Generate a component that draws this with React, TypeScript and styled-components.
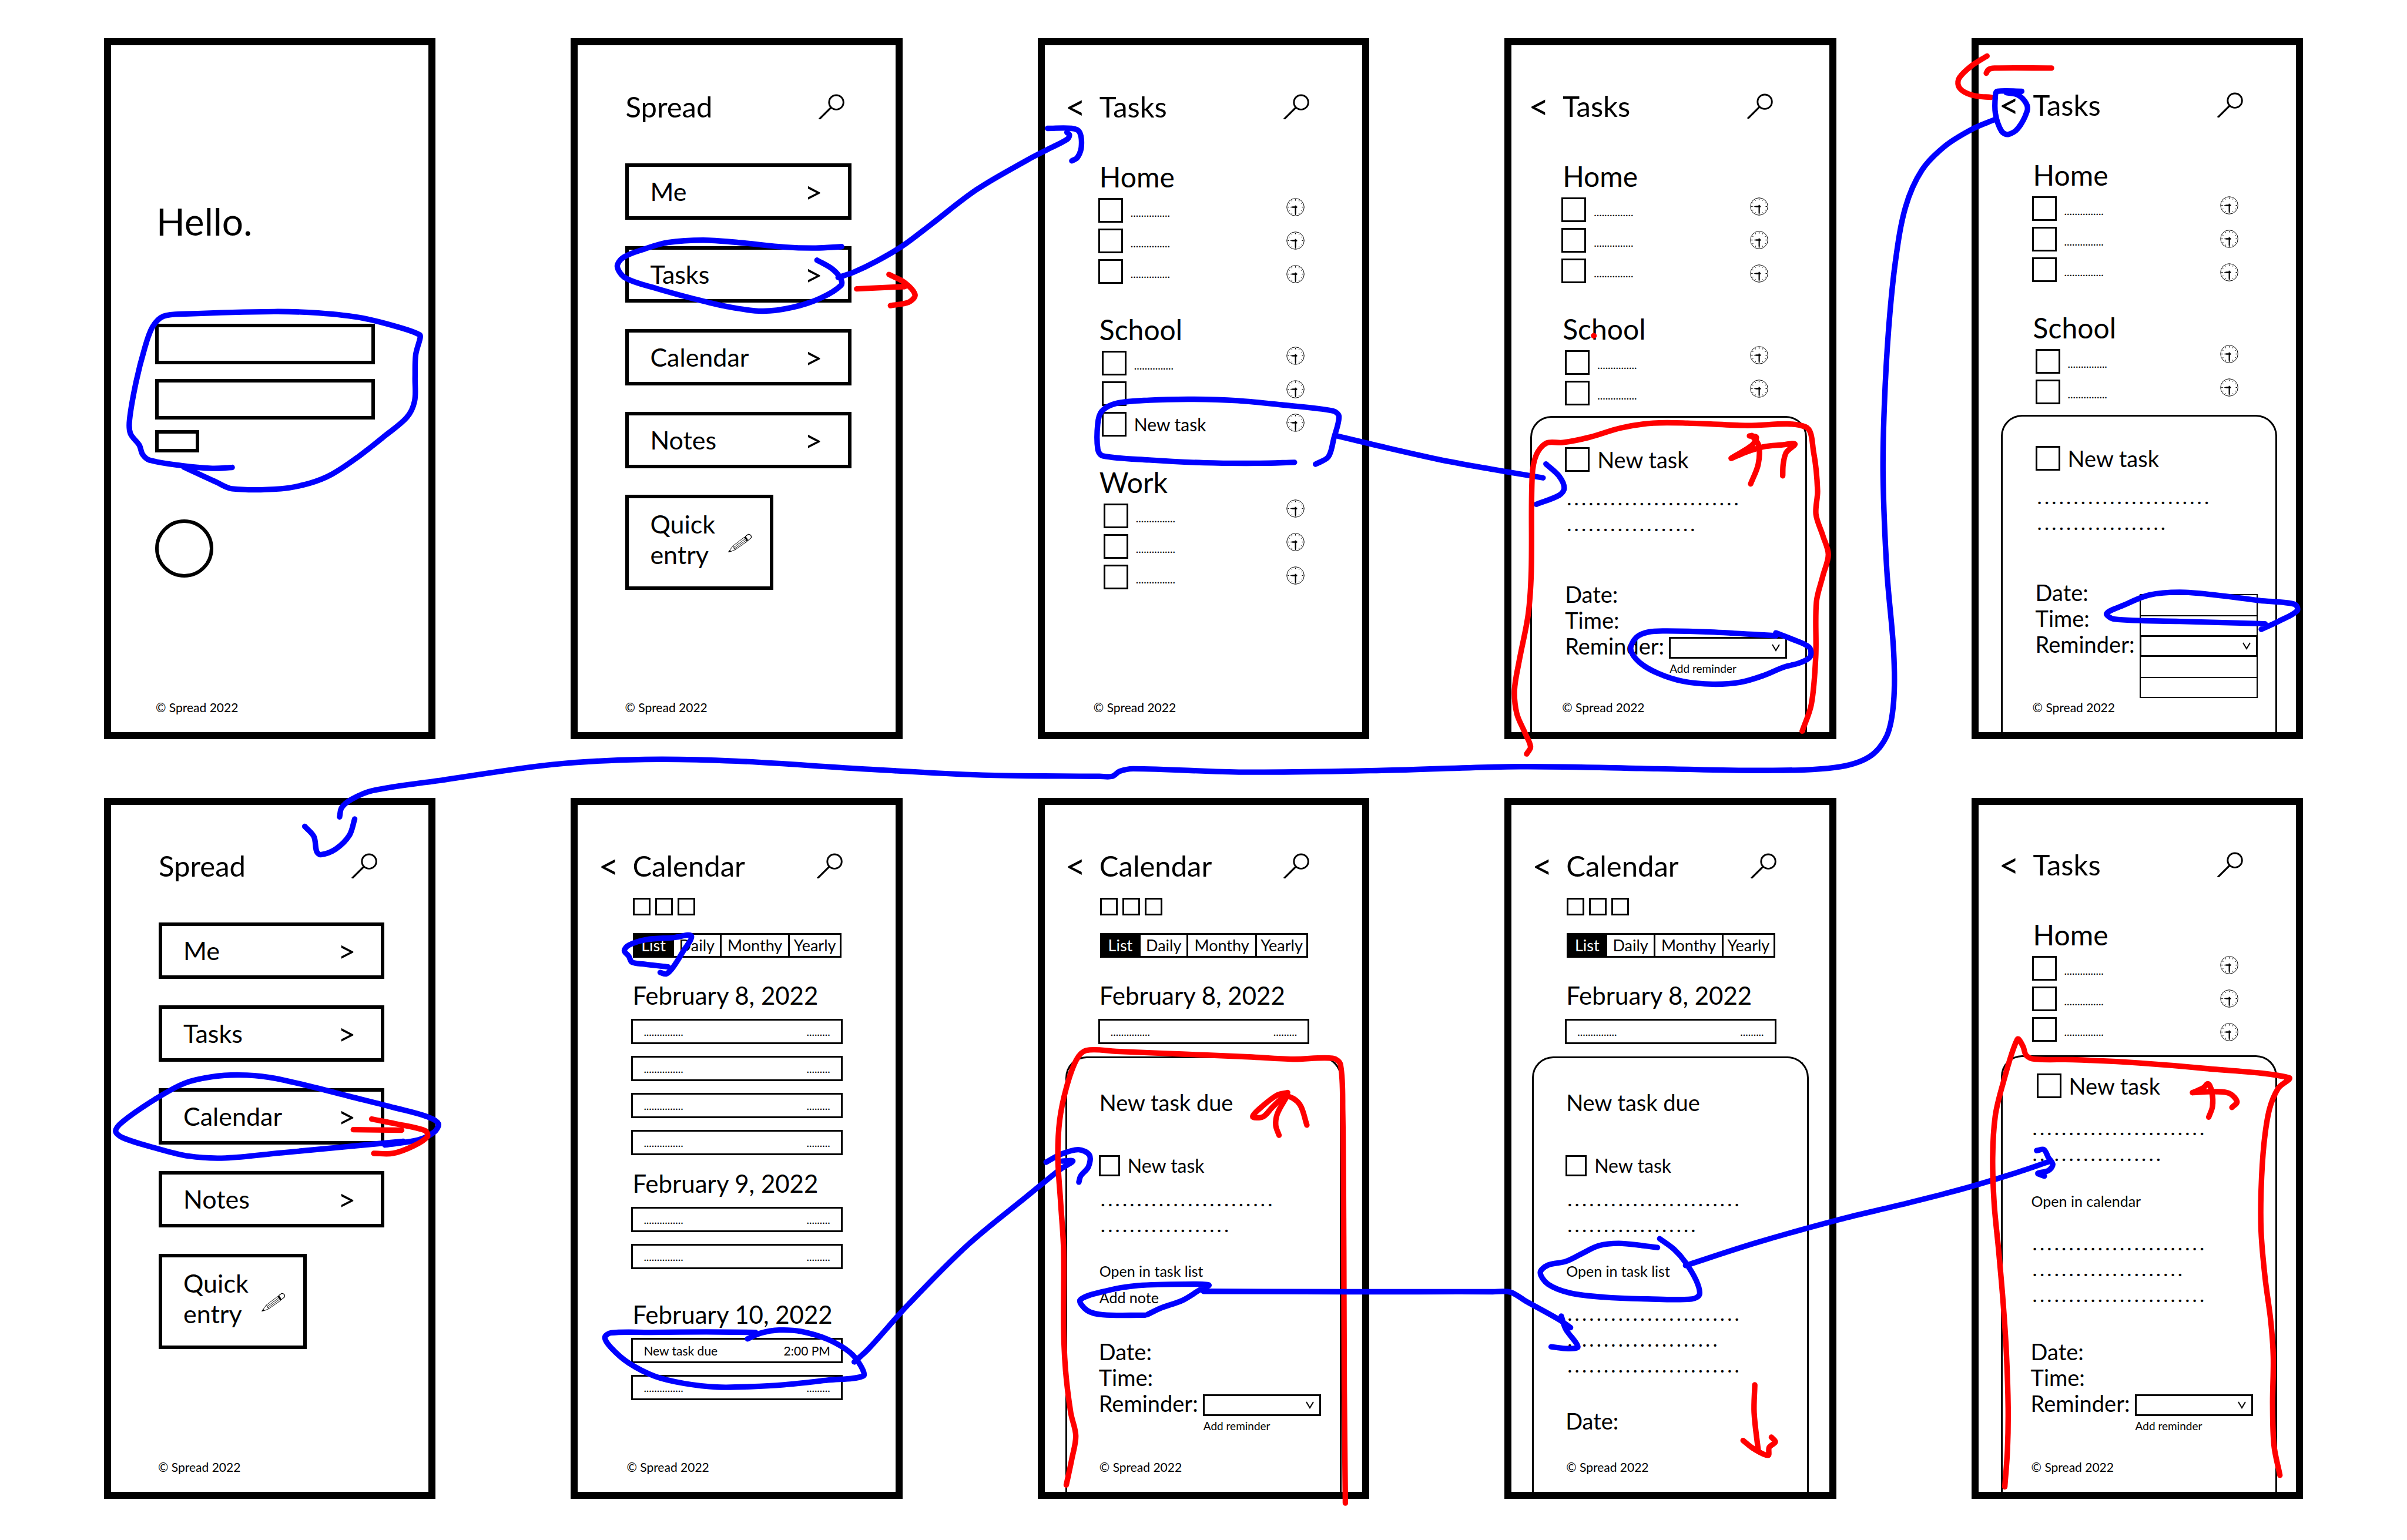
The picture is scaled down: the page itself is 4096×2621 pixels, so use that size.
import React, { useId } from 'react';
import styled, { createGlobalStyle, css } from 'styled-components';

const INK = '#000000';
const PAPER = '#ffffff';
const BLUE = '#0000ff';
const RED = '#ff0000';

const GlobalStyle = createGlobalStyle`
  *, *::before, *::after { box-sizing: border-box; }
  body {
    margin: 0;
    background: ${PAPER};
    color: ${INK};
    font-family: Lato, "Liberation Sans", sans-serif;
  }
  button, input, select {
    margin: 0;
    padding: 0;
    border: 0;
    border-radius: 0;
    background: ${PAPER};
    color: inherit;
    font: inherit;
    appearance: none;
  }
  h1, h2, h3, p, ul { margin: 0; padding: 0; font-weight: 400; }
  ul { list-style: none; }
  a { color: inherit; text-decoration: none; }
  svg { display: block; }
`;

/* ---------- board and phone frame ---------- */

const Board = styled.main`
  position: relative;
  display: grid;
  grid-template-columns: repeat(5, minmax(0, 1fr));
  gap: 100px 230px;
  padding: 65px 177px 70px;
`;

const Frame = styled.section`
  display: flex;
  flex-direction: column;
  min-height: 1193px;
  border: 12px solid ${INK};
  overflow: hidden;
`;

const Upper = styled.div<{ $shift?: number; $top: number }>`
  display: flex;
  flex-direction: column;
  padding-top: ${p => p.$top}px;
  margin: 0 ${p => p.$shift ?? 0}px 0 ${p => -(p.$shift ?? 0)}px;
`;

const Legal = styled.footer<{ $left: number }>`
  margin: auto 0 30px ${p => p.$left}px;
  font-size: 21px;
  line-height: 24px;
`;

/* ---------- header ---------- */

const HeaderBar = styled.header<{ $root?: boolean }>`
  display: flex;
  align-items: center;
  height: 48px;
  padding: ${p => (p.$root ? '0 87px 0 81px' : '0 90px 0 35px')};
`;

const BackButton = styled.button`
  width: 58px;
  text-align: left;
  font-size: 60px;
  line-height: 48px;
`;

const Title = styled.h1`
  flex: 1;
  font-size: 49px;
  line-height: 48px;
`;

const IconButton = styled.button`
  display: block;
  flex: none;
`;

const SearchIcon = () => (
  <svg width="44" height="44" viewBox="18 46 180 180" aria-hidden="true">
    <circle cx="141" cy="108" r="50" fill="none" stroke={INK} strokeWidth="12" />
    <path d="M105 144 22 226" fill="none" stroke={INK} strokeWidth="13" />
  </svg>
);

function Header({ title, root }: { title: string; root?: boolean }) {
  return (
    <HeaderBar $root={root}>
      {!root && <BackButton aria-label="Back">&lt;</BackButton>}
      <Title>{title}</Title>
      <IconButton aria-label="Search"><SearchIcon /></IconButton>
    </HeaderBar>
  );
}

/* ---------- login ---------- */

const Login = styled.form`
  display: flex;
  flex-direction: column;
  align-items: flex-start;
  padding: 268px 91px 0 75px;
`;

const Greeting = styled.h1`
  padding: 0 2px;
  margin-bottom: 142px;
  font-size: 64px;
  line-height: 64px;
`;

const LoginField = styled.input`
  width: 100%;
  height: 69px;
  padding: 0 16px;
  margin-bottom: 25px;
  border: 6px solid ${INK};
  font-size: 32px;
`;

const Submit = styled.button`
  width: 75px;
  height: 38px;
  margin: -7px 0 114px;
  border: 6px solid ${INK};
`;

const Round = styled.button`
  width: 99px;
  height: 99px;
  border: 6px solid ${INK};
  border-radius: 50%;
`;

function LoginScreen() {
  return (
    <Frame>
      <Login onSubmit={e => e.preventDefault()}>
        <Greeting>Hello.</Greeting>
        <LoginField type="text" aria-label="User name" />
        <LoginField type="password" aria-label="Password" />
        <Submit type="submit" aria-label="Sign in" />
        <Round type="button" aria-label="Profile" />
      </Login>
      <Legal $left={76}>© Spread 2022</Legal>
    </Frame>
  );
}

/* ---------- main menu ---------- */

const Menu = styled.nav`
  display: flex;
  flex-direction: column;
  align-items: flex-start;
  gap: 45px;
  padding: 73px 75px 0 81px;
`;

const MenuButton = styled.button`
  display: flex;
  align-items: center;
  justify-content: space-between;
  width: 100%;
  height: 96px;
  padding: 0 43px 0 36px;
  border: 6px solid ${INK};
  text-align: left;
  font-size: 43px;
  line-height: 52px;
`;

const Chevron = styled.span`
  font-size: 53px;
`;

const QuickButton = styled(MenuButton)`
  width: 252px;
  height: 162px;
  padding: 0 31px 10px 36px;
`;

const PencilIcon = () => (
  <svg width="40" height="44" viewBox="70 28 168 184" aria-hidden="true">
    <g fill="none" stroke={INK} strokeWidth="4" strokeLinejoin="round">
      <path d="M72 210 84 195 103 168 184 106M72 210 92 206 122 193 207 134" />
      <path d="M103 168 112 176 110 183 119 185 122 193" />
      <path d="M112 176 190 118M119 185 198 126" />
      <path d="M193 99 213 84Q224 82 232 91Q238 101 235 109L212 128" strokeWidth="5" />
    </g>
    <path d="M181 108 194 98Q207 110 213 127L202 137Q200 118 181 108ZM70 212 84 196 92 206Z" fill={INK} />
  </svg>
);

function MenuScreen({ top }: { top: number }) {
  return (
    <Frame>
      <Upper $top={top}>
        <Header root title="Spread" />
        <Menu>
          {['Me', 'Tasks', 'Calendar', 'Notes'].map(item => (
            <MenuButton key={item}><span>{item}</span><Chevron>&gt;</Chevron></MenuButton>
          ))}
          <QuickButton><span>Quick<br />entry</span><PencilIcon /></QuickButton>
        </Menu>
      </Upper>
      <Legal $left={80}>© Spread 2022</Legal>
    </Frame>
  );
}

/* ---------- tasks ---------- */

const Groups = styled.div`
  display: flex;
  flex-direction: column;
  gap: 54px;
  padding: 72px 98px 0 91px;
`;

const GroupTitle = styled.h2`
  padding-left: 2px;
  margin-bottom: 12px;
  font-size: 48px;
  line-height: 48px;
`;

const GroupBody = styled.div`
  display: flex;
  justify-content: space-between;
  align-items: flex-start;
`;

const TaskList = styled.ul<{ $indent: number }>`
  display: flex;
  flex-direction: column;
  gap: 10px;
  padding-left: ${p => p.$indent}px;
`;

const ClockList = styled.div<{ $lift: number }>`
  display: flex;
  flex-direction: column;
  gap: 26px;
  margin-top: ${p => -p.$lift}px;
`;

const CheckRow = styled.label<{ $size: 'list' | 'small' | 'large'; $indent?: number }>`
  display: flex;
  align-items: center;
  gap: 13px;
  padding-left: ${p => p.$indent ?? 0}px;
  font-size: ${p => ({ list: 30, small: 32, large: 38 })[p.$size]}px;
  line-height: 36px;
`;

const Tick = styled.input<{ $small?: boolean }>`
  flex: none;
  width: ${p => (p.$small ? 36 : 42)}px;
  height: ${p => (p.$small ? 36 : 42)}px;
  border: 3px solid ${INK};
`;

const FinePrint = styled.span<{ $low?: boolean }>`
  font-size: 19px;
  line-height: 24px;
  ${p => p.$low && css`padding-top: 8px;`}
`;

const ClockIcon = () => (
  <svg width="31" height="31" viewBox="0 0 130 130" aria-hidden="true">
    <circle cx="65" cy="65" r="62" fill="none" stroke={INK} strokeWidth="4" />
    {Array.from({ length: 12 }, (_, i) => (
      <rect
        key={i}
        x="62.5"
        y={i % 3 ? 11 : 9}
        width="5"
        height={i % 3 ? 5 : 10}
        fill={INK}
        transform={`rotate(${i * 30} 65 65)`}
      />
    ))}
    <path d="M76 61H46L28 65 46 69H76ZM62 54V108L65 122 69 108V54Z" fill={INK} stroke={INK} strokeWidth="2" />
  </svg>
);

const SHORT_NOTE = '...............';
const SHORT_TIME = '.........';

type Group = { title: string; indent: number; lift: number; tasks: string[] };

const home: Group = { title: 'Home', indent: 0, lift: 0, tasks: ['', '', ''] };
const school: Group = { title: 'School', indent: 6, lift: 7, tasks: ['', ''] };
const schoolWithNew: Group = { ...school, tasks: ['', '', 'New task'] };
const work: Group = { title: 'Work', indent: 9, lift: 7, tasks: ['', '', ''] };

function TaskGroups({ groups }: { groups: Group[] }) {
  return (
    <Groups>
      {groups.map(g => (
        <section key={g.title}>
          <GroupTitle>{g.title}</GroupTitle>
          <GroupBody>
            <TaskList $indent={g.indent}>
              {g.tasks.map((t, i) => (
                <li key={i}>
                  <CheckRow $size="list">
                    <Tick type="checkbox" />
                    {t || <FinePrint $low>{SHORT_NOTE}</FinePrint>}
                  </CheckRow>
                </li>
              ))}
            </TaskList>
            <ClockList $lift={g.lift}>
              {g.tasks.map((_, i) => (
                <IconButton key={i} aria-label="Set time"><ClockIcon /></IconButton>
              ))}
            </ClockList>
          </GroupBody>
        </section>
      ))}
    </Groups>
  );
}

/* ---------- calendar ---------- */

const Calendar = styled.div`
  display: flex;
  flex-direction: column;
  padding: 31px 90px 0 91px;
`;

const Swatches = styled.div`
  display: flex;
  gap: 8px;
  padding-left: 3px;
`;

const Swatch = styled.button`
  width: 30px;
  height: 30px;
  border: 3px solid ${INK};
`;

const Tabs = styled.div`
  display: grid;
  grid-template-columns: 63fr 81fr 116fr 87fr;
  height: 42px;
  margin: 30px 2px 0 3px;
  border: 3px solid ${INK};
`;

const Tab = styled.button<{ $on?: boolean }>`
  border-left: 3px solid ${INK};
  background: ${p => (p.$on ? INK : PAPER)};
  color: ${p => (p.$on ? PAPER : INK)};
  font-size: 27px;
  line-height: 32px;
  text-align: center;
  &:first-child { border-left: 0; }
`;

const DayTitle = styled.h2<{ $above: number }>`
  padding-left: 2px;
  margin: ${p => p.$above}px 0 16px;
  font-size: 42px;
  line-height: 48px;
`;

const Entries = styled.ul`
  display: flex;
  flex-direction: column;
  gap: 20px;
`;

const Entry = styled.li`
  display: flex;
  align-items: center;
  justify-content: space-between;
  height: 43px;
  padding: 0 18px;
  border: 3px solid ${INK};
`;

const EntryText = styled.span`
  font-size: 21px;
  line-height: 24px;
`;

type Day = { date: string; above: number; entries: [string, string][] };
const blank: [string, string] = ['', ''];

function CalendarBody({ days }: { days: Day[] }) {
  return (
    <Calendar>
      <Swatches>
        {['First', 'Second', 'Third'].map(n => <Swatch key={n} aria-label={`${n} calendar`} />)}
      </Swatches>
      <Tabs role="tablist">
        {['List', 'Daily', 'Monthy', 'Yearly'].map((t, i) => (
          <Tab key={t} role="tab" aria-selected={i === 0} $on={i === 0}>{t}</Tab>
        ))}
      </Tabs>
      {days.map(d => (
        <section key={d.date}>
          <DayTitle $above={d.above}>{d.date}</DayTitle>
          <Entries>
            {d.entries.map(([what, when], i) => (
              <Entry key={i}>
                {what ? <EntryText>{what}</EntryText> : <FinePrint>{SHORT_NOTE}</FinePrint>}
                {when ? <EntryText>{when}</EntryText> : <FinePrint>{SHORT_TIME}</FinePrint>}
              </Entry>
            ))}
          </Entries>
        </section>
      ))}
    </Calendar>
  );
}

const feb8: Day = { date: 'February 8, 2022', above: 40, entries: [blank, blank, blank, blank] };
const feb8Short: Day = { ...feb8, entries: [blank] };
const feb9: Day = { date: 'February 9, 2022', above: 24, entries: [blank, blank] };
const feb10: Day = { date: 'February 10, 2022', above: 53, entries: [['New task due', '2:00 PM'], blank] };

/* ---------- bottom sheet ---------- */

const Sheet = styled.section<{ $above: number; $side: number; $pad: number; $top: number }>`
  flex: 1;
  display: flex;
  flex-direction: column;
  margin: ${p => p.$above}px ${p => 70 - p.$side}px 0 ${p => p.$side}px;
  padding: ${p => p.$top}px 0 0 ${p => p.$pad}px;
  border: 3px solid ${INK};
  border-bottom: 0;
  border-radius: 36px 36px 0 0;
  background: ${PAPER};
`;

const SheetTitle = styled.h2`
  padding-left: 1px;
  margin-bottom: 66px;
  font-size: 38px;
  line-height: 48px;
`;

const NoteLines = styled.p<{ $above: number }>`
  margin-top: ${p => p.$above}px;
  padding-left: 4px;
  font-size: 26px;
  font-weight: 900;
  line-height: 44px;
  white-space: nowrap;
`;

const Links = styled.div<{ $above: number }>`
  display: flex;
  flex-direction: column;
  align-items: flex-start;
  margin-top: ${p => p.$above}px;
  padding-left: 1px;
  font-size: 25px;
  line-height: 45px;
`;

const Fields = styled.div<{ $above: number }>`
  margin-top: ${p => p.$above}px;
  font-size: 38px;
  line-height: 44px;
`;

const ReminderRow = styled.div`
  display: grid;
  grid-template-columns: 177px 201px;
  align-items: end;
`;

const SelectBox = styled.div`
  position: relative;
`;

const Select = styled.select`
  display: block;
  width: 100%;
  height: 37px;
  border: 3px solid ${INK};
`;

const Caret = styled.svg`
  position: absolute;
  top: 12px;
  right: 12px;
  pointer-events: none;
`;

const Options = styled.ul<{ $side: 'above' | 'below' }>`
  position: absolute;
  left: 0;
  right: 0;
  ${p => (p.$side === 'above' ? 'bottom: 100%;' : 'top: 100%;')}
  border: 2px solid ${INK};
  ${p => (p.$side === 'above' ? 'border-bottom: 0;' : 'border-top: 0;')}
`;

const Option = styled.li`
  height: 34px;
  & + & { border-top: 2px solid ${INK}; }
`;

const AddReminder = styled.a`
  display: block;
  padding: 5px 0 0 178px;
  font-size: 19px;
  line-height: 24px;
`;

const dots = (n: number) => Array(n).fill('.').join(' ');

function Notes({ above, lines }: { above: number; lines: number[] }) {
  return (
    <NoteLines $above={above}>
      {lines.map((n, i) => <React.Fragment key={i}>{i > 0 && <br />}{dots(n)}</React.Fragment>)}
    </NoteLines>
  );
}

function ReminderFields({ above, open }: { above: number; open?: boolean }) {
  const id = useId();
  return (
    <Fields $above={above}>
      <p>Date:</p>
      <p>Time:</p>
      <ReminderRow>
        <label htmlFor={id}>Reminder:</label>
        <SelectBox>
          <Select id={id} />
          <Caret width="14" height="13" viewBox="0 0 14 13" aria-hidden="true">
            <path d="M1 1 7 11 13 1" fill="none" stroke={INK} strokeWidth="2" />
          </Caret>
          {open && <Options $side="above"><Option /><Option /></Options>}
          {open && <Options $side="below"><Option /><Option /></Options>}
        </SelectBox>
      </ReminderRow>
      {!open && <AddReminder href="#add-reminder">Add reminder</AddReminder>}
    </Fields>
  );
}

/* ---------- pen marks over the board ---------- */

type Area = [x: number, y: number, w: number, h: number];
type Mark = { area: Area; color: string; pts: number[] };

const GRID = 1568;
const sheetA: Area = [230, 60, 820, 1720];
const sheetB: Area = [1330, 60, 870, 1720];
const sheetC: Area = [2430, 60, 820, 1720];
const sheetD: Area = [3530, 60, 850, 1760];
const sheetE: Area = [4600, 60, 870, 1720];
const sheetF: Area = [230, 1860, 850, 1720];
const sheetG: Area = [1330, 1860, 820, 1720];
const sheetH: Area = [2430, 1860, 820, 1720];
const sheetI: Area = [3530, 1860, 820, 1720];
const sheetJ: Area = [4640, 1860, 820, 1720];
const board: Area = [0, 0, GRID, GRID];

const blue = (area: Area, ...pts: number[]): Mark => ({ area, color: BLUE, pts });
const red = (area: Area, ...pts: number[]): Mark => ({ area, color: RED, pts });

const marks: Mark[] = [
  blue(sheetA, 610,953, 520,955, 380,949, 235,937, 205,925, 190,905, 150,880, 146,850, 175,770, 215,695, 250,650, 300,627, 400,622, 800,617, 1000,620, 1200,631, 1380,653, 1458,667, 1460,674, 1440,710, 1437,760, 1435,810, 1400,845, 1300,885, 1180,930, 1060,968, 960,987, 830,999, 610,999, 540,985, 390,952),
  blue(sheetB, 1190,477, 1080,480, 950,478, 750,468, 600,463, 450,468, 350,482, 260,500, 234,520, 270,545, 400,567, 550,588, 700,606, 850,616, 980,608, 1100,588, 1188,560, 1185,545, 1150,525, 1085,506),
  blue(board, 1982,656, 2018,644, 2074,617, 2135,581, 2200,532, 2310,448, 2430,378, 2482,351, 2524,329, 2529,319, 2523,313),
  blue(sheetC, 90,222, 200,222, 235,230, 243,262, 225,285, 200,292),
  red(sheetB, 1254,568, 1460,563),
  red(sheetB, 1392,537, 1460,555, 1503,581, 1475,597, 1398,604),
  blue(sheetC, 1207,942, 1050,944, 800,943, 550,937, 340,928, 318,915, 317,860, 335,832, 400,815, 550,808, 750,806, 950,809, 1150,818, 1380,831, 1408,843, 1385,890, 1360,930, 1302,946),
  blue(board, 3158,1030, 3250,1052, 3400,1086, 3530,1110, 3649,1130),
  blue(sheetD, 232,924, 290,950, 312,975, 290,990, 190,1009),
  red(sheetD, 148,1535, 165,1520, 140,1490, 105,1450, 95,1400, 115,1340, 155,1240, 168,1150, 172,950, 190,905, 235,880, 305,879, 420,868, 560,848, 700,838, 850,838, 1100,843, 1365,846, 1400,900, 1417,980, 1410,1030, 1440,1075, 1464,1115, 1440,1160, 1412,1215, 1409,1330, 1390,1430, 1350,1487),
  red(sheetD, 1120,865, 1150,868, 1130,885, 1040,912, 1100,900, 1180,888, 1260,884, 1318,882, 1280,900, 1267,925, 1265,949),
  red(sheetD, 1130,864, 1160,885, 1158,925, 1125,966),
  red(sheetD, 440,654, 442,654),
  blue(sheetD, 1235,1280, 1300,1292, 1380,1310, 1385,1330, 1340,1343, 1270,1352, 1180,1370, 1080,1384, 960,1388, 830,1382, 720,1365, 640,1342, 602,1315, 625,1290, 680,1278, 760,1276, 950,1278, 1235,1286),
  red(sheetE, 453,92, 210,92, 185,95, 175,103),
  red(sheetE, 178,66, 110,88, 60,113, 56,130, 80,143, 130,152, 195,155),
  blue(sheetE, 326,142, 222,142, 214,150, 214,190, 240,228, 268,235, 310,222, 349,185, 345,168, 310,150, 260,145),
  blue(board, 4716,283, 4666,304, 4600,345, 4545,402, 4506,490, 4482,620, 4466,780, 4456,960, 4453,1125, 4462,1350, 4478,1540, 4478,1660, 4462,1740, 4420,1790, 4340,1815, 4175,1822, 3920,1818, 3594,1813, 3267,1822, 2940,1826, 2680,1818, 2648,1824, 2630,1836, 2600,1836, 2323,1833, 2033,1818, 1742,1800, 1525,1796, 1307,1808, 1052,1844, 880,1870, 832,1890, 808,1910, 803,1932),
  blue(sheetF, 905,86, 945,108, 957,140, 975,147, 1040,135, 1100,105, 1123,70),
  blue(sheetE, 1363,1290, 1000,1285, 720,1280, 688,1268, 760,1250, 870,1228, 1000,1222, 1150,1228, 1340,1240, 1490,1248, 1500,1262, 1420,1285, 1347,1302),
  blue(sheetF, 1335,765, 1100,776, 800,790, 560,801, 400,797, 250,779, 110,757, 80,743, 110,723, 250,675, 380,640, 500,626, 620,622, 750,627, 900,643, 1100,668, 1300,693, 1440,712, 1488,727, 1470,745, 1400,762, 1255,773),
  red(sheetF, 1117,740, 1328,741),
  red(sheetF, 1197,717, 1300,727, 1430,742, 1440,755, 1380,775, 1290,791, 1206,791),
  blue(sheetG, 442,401, 470,404, 500,390, 540,360, 583,322, 500,326, 380,330, 300,342, 280,354, 300,366, 315,379, 370,383, 478,389),
  blue(sheetG, 873,1177, 650,1176, 400,1177, 220,1178, 192,1188, 220,1210, 300,1243, 420,1272, 550,1287, 700,1295, 850,1294, 1000,1290, 1200,1280, 1360,1271, 1350,1250, 1300,1220, 1200,1192, 1080,1175, 980,1172, 900,1178, 837,1191),
  blue(board, 2020,3221, 2052,3192, 2150,3083, 2290,2943, 2430,2828, 2508,2765, 2537,2746, 2512,2746),
  blue(sheetH, 84,810, 150,793, 230,783, 280,795, 275,820, 240,840, 232,853),
  red(sheetH, 175,1506, 200,1450, 218,1400, 195,1350, 172,1260, 163,1170, 163,1000, 150,900, 137,800, 145,720, 175,650, 220,590, 265,569, 400,571, 700,577, 1000,583, 1200,588, 1380,586, 1415,600, 1425,700, 1430,1000, 1432,1300, 1437,1545),
  red(sheetH, 1176,660, 1130,665, 1060,690, 1018,712, 1065,712, 1110,690, 1170,668, 1230,685, 1263,730),
  red(sheetH, 1170,670, 1130,705, 1122,730, 1137,752),
  blue(sheetH, 540,1139, 600,1125, 700,1108, 780,1085, 820,1075, 750,1073, 500,1076, 350,1088, 238,1107, 270,1130, 340,1139, 530,1140),
  blue(board, 2846,3054, 3200,3055, 3530,3055, 3572,3056, 3608,3077, 3687,3121, 3714,3140),
  blue(sheetI, 310,1142, 330,1170, 385,1208, 340,1212, 264,1208),
  blue(sheetI, 745,994, 680,990, 570,985, 480,990, 400,1008, 330,1024, 250,1032, 215,1048, 250,1073, 350,1092, 500,1101, 700,1105, 900,1105, 935,1095, 920,1065, 870,1025, 820,998, 755,975),
  blue(board, 3986,2993, 4150,2940, 4350,2884, 4500,2848, 4640,2812, 4760,2776, 4849,2746),
  blue(sheetJ, 337,785, 370,783, 390,800, 410,815, 390,828, 342,834, 372,840),
  red(sheetI, 1185,1290, 1182,1350, 1200,1430),
  red(sheetI, 1132,1410, 1180,1428, 1245,1442, 1250,1425, 1278,1413, 1260,1403),
  red(sheetJ, 193,1510, 205,1430, 208,1340, 200,1220, 185,1110, 165,1000, 145,900, 138,800, 150,710, 185,640, 250,545, 275,560, 290,580, 330,588, 500,589, 800,596, 1100,608, 1478,628, 1430,650, 1390,695, 1365,770, 1352,870, 1352,960, 1370,1060, 1395,1150, 1407,1230, 1404,1330, 1410,1420, 1437,1485),
  red(sheetJ, 1042,660, 1090,650, 1112,641, 1130,660, 1132,690, 1115,713),
  red(sheetJ, 1042,660, 1150,658, 1210,662, 1243,680, 1220,692),
];

/* Catmull-Rom through the pen samples, written as cubic segments. */
function penPath({ area: [ax, ay, aw, ah], pts }: Mark): string {
  const p: [number, number][] = [];
  for (let i = 0; i < pts.length; i += 2) {
    p.push([ax + (pts[i] * aw) / GRID, ay + (pts[i + 1] * ah) / GRID]);
  }
  const at = (i: number) => p[Math.max(0, Math.min(p.length - 1, i))];
  const f = (n: number) => n.toFixed(1);
  let d = `M${f(p[0][0])} ${f(p[0][1])}`;
  for (let i = 0; i < p.length - 1; i++) {
    const [a, b, c, e] = [at(i - 1), at(i), at(i + 1), at(i + 2)];
    const len = Math.hypot(c[0] - b[0], c[1] - b[1]);
    const k1 = len / (Math.hypot(b[0] - a[0], b[1] - a[1]) + len) / 3;
    const k2 = len / (Math.hypot(e[0] - c[0], e[1] - c[1]) + len) / 3;
    d += `C${f(b[0] + (c[0] - a[0]) * k1)} ${f(b[1] + (c[1] - a[1]) * k1)} ${f(c[0] - (e[0] - b[0]) * k2)} ${f(c[1] - (e[1] - b[1]) * k2)} ${f(c[0])} ${f(c[1])}`;
  }
  return d;
}

const Pen = styled.svg`
  position: absolute;
  inset: 0;
  width: 100%;
  height: 100%;
  pointer-events: none;
`;

function PenMarks() {
  return (
    <Pen viewBox="0 0 5692 3642" fill="none" strokeWidth="13" strokeLinecap="round" strokeLinejoin="round" aria-hidden="true">
      {marks.map((m, i) => <path key={i} d={penPath(m)} stroke={m.color} />)}
    </Pen>
  );
}

/* ---------- page ---------- */

export default function App() {
  return (
    <>
      <GlobalStyle />
      <Board>
        <LoginScreen />
        <MenuScreen top={80} />
        <Frame>
          <Upper $top={80}>
            <Header title="Tasks" />
            <TaskGroups groups={[home, schoolWithNew, work]} />
          </Upper>
          <Legal $left={83}>© Spread 2022</Legal>
        </Frame>
        <Frame>
          <Upper $top={79} $shift={6}>
            <Header title="Tasks" />
            <TaskGroups groups={[home, school]} />
          </Upper>
          <Sheet $above={18} $side={32} $pad={56} $top={50}>
            <CheckRow $size="large"><Tick type="checkbox" />New task</CheckRow>
            <Notes above={25} lines={[24, 18]} />
            <ReminderFields above={73} />
            <Legal $left={-5}>© Spread 2022</Legal>
          </Sheet>
        </Frame>
        <Frame>
          <Upper $top={77}>
            <Header title="Tasks" />
            <TaskGroups groups={[home, school]} />
          </Upper>
          <Sheet $above={18} $side={38} $pad={56} $top={50}>
            <CheckRow $size="large"><Tick type="checkbox" />New task</CheckRow>
            <Notes above={25} lines={[24, 18]} />
            <ReminderFields above={72} open />
            <Legal $left={-5}>© Spread 2022</Legal>
          </Sheet>
        </Frame>

        <MenuScreen top={79} />
        <Frame>
          <Upper $top={79}>
            <Header title="Calendar" />
            <CalendarBody days={[feb8, feb9, feb10]} />
          </Upper>
          <Legal $left={83}>© Spread 2022</Legal>
        </Frame>
        <Frame>
          <Upper $top={79}>
            <Header title="Calendar" />
            <CalendarBody days={[feb8Short]} />
          </Upper>
          <Sheet $above={21} $side={35} $pad={54} $top={51}>
            <SheetTitle>New task due</SheetTitle>
            <CheckRow $size="small"><Tick type="checkbox" $small />New task</CheckRow>
            <Notes above={19} lines={[24, 18]} />
            <Links $above={32}>
              <a href="#task-list">Open in task list</a>
              <a href="#add-note">Add note</a>
            </Links>
            <ReminderFields above={47} />
            <Legal $left={1}>© Spread 2022</Legal>
          </Sheet>
        </Frame>
        <Frame>
          <Upper $top={79}>
            <Header title="Calendar" />
            <CalendarBody days={[feb8Short]} />
          </Upper>
          <Sheet $above={21} $side={35} $pad={54} $top={51}>
            <SheetTitle>New task due</SheetTitle>
            <CheckRow $size="small"><Tick type="checkbox" $small />New task</CheckRow>
            <Notes above={19} lines={[24, 18]} />
            <Links $above={32}>
              <a href="#task-list">Open in task list</a>
            </Links>
            <Notes above={30} lines={[24, 21, 24]} />
            <Fields $above={48}><p>Date:</p></Fields>
            <Legal $left={1}>© Spread 2022</Legal>
          </Sheet>
        </Frame>
        <Frame>
          <Upper $top={77}>
            <Header title="Tasks" />
            <TaskGroups groups={[home]} />
          </Upper>
          <Sheet $above={23} $side={38} $pad={48} $top={28}>
            <CheckRow $size="large" $indent={10}><Tick type="checkbox" />New task</CheckRow>
            <Notes above={31} lines={[24, 18]} />
            <Links $above={34}>
              <a href="#calendar">Open in calendar</a>
            </Links>
            <Notes above={29} lines={[24, 21, 24]} />
            <ReminderFields above={50} />
            <Legal $left={1}>© Spread 2022</Legal>
          </Sheet>
        </Frame>
        <PenMarks />
      </Board>
    </>
  );
}
